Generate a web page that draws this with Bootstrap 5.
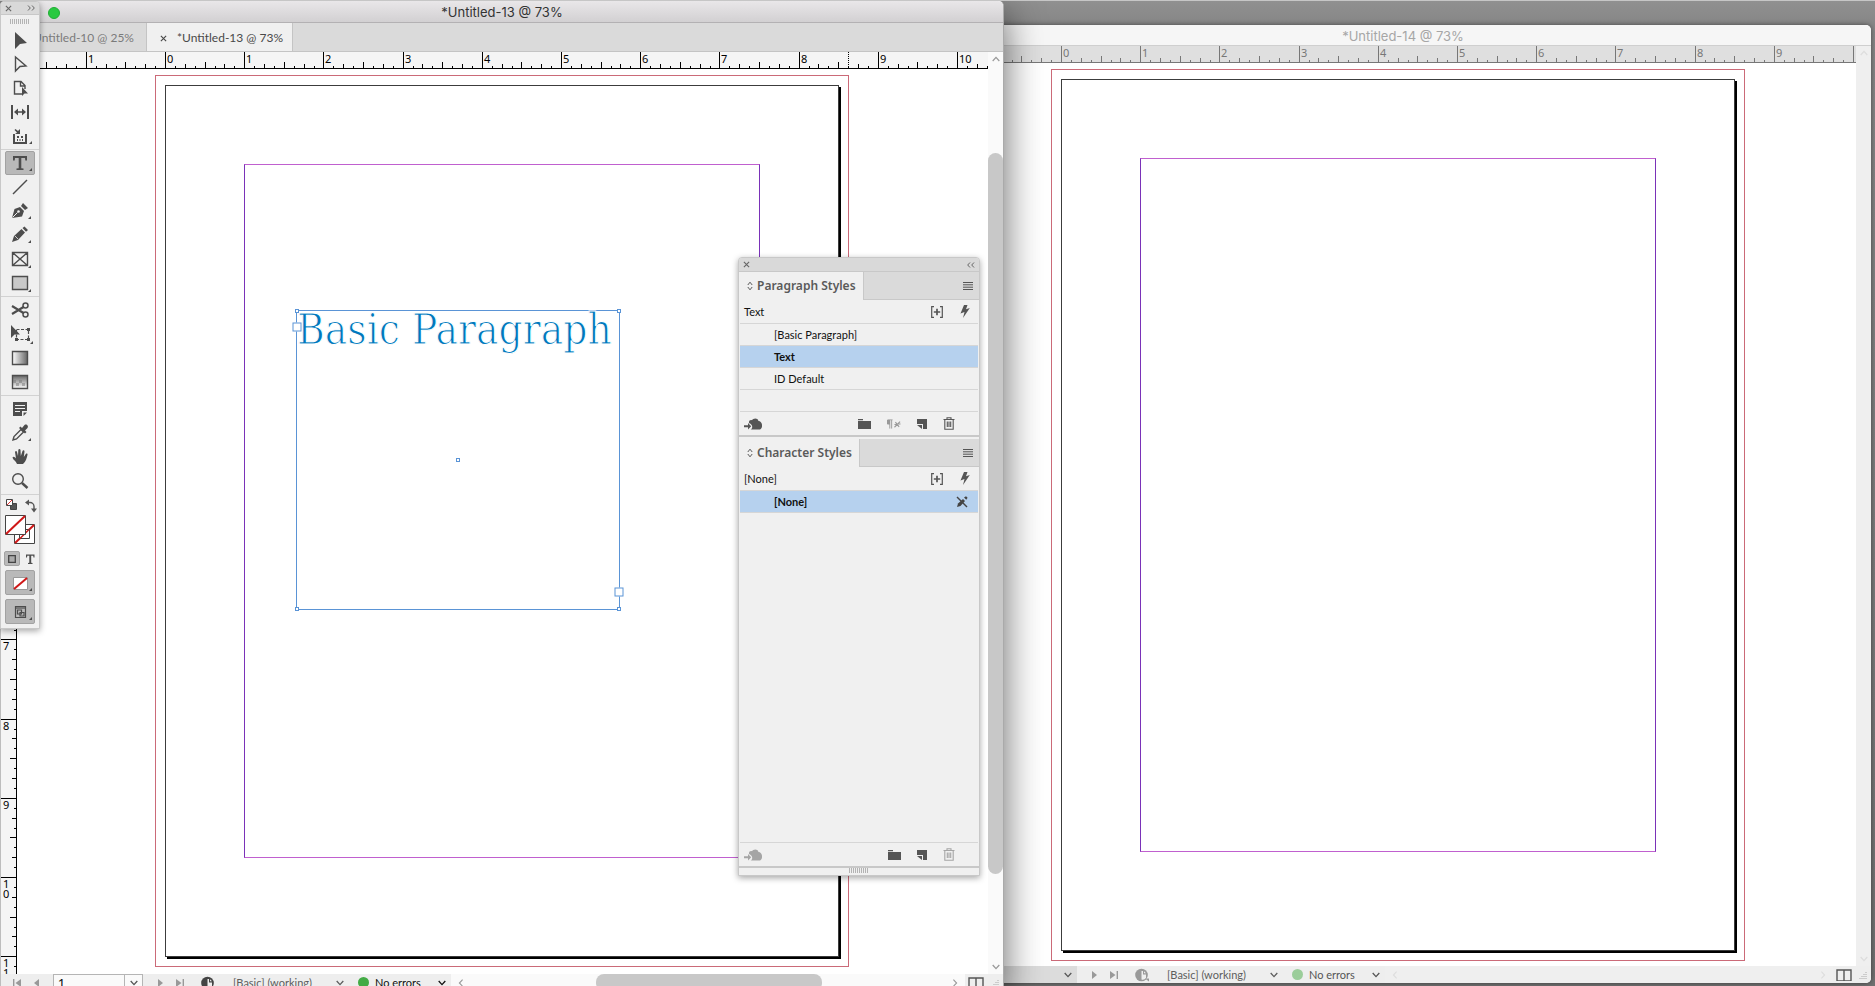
<!DOCTYPE html>
<html lang="en">
<head>
<meta charset="utf-8">
<meta name="viewport" content="width=device-width, initial-scale=1">
<title>Untitled-13 @ 73%</title>
<link href="https://cdn.jsdelivr.net/npm/bootstrap@5.3.0/dist/css/bootstrap.min.css" rel="stylesheet">
<style>
  html, body { height: 100%; }
  body { font-family: Lato, "Noto Sans", sans-serif; font-size: 11px; line-height: 16px; color: #111; overflow: hidden; background: #8c8c8c; }
  button { border: 0; padding: 0; background: none; color: inherit; line-height: inherit; display: inline-flex; align-items: center; justify-content: center; flex: none; }
  svg { display: block; flex: none; }
  .desktop { height: 100vh; border-top: 1px solid #c6c6c6; background: linear-gradient(#909090, #868686 24px, #707070); }

  /* document windows */
  .doc-window { background: #fff; }
  .win-front { left: 0; top: 0; bottom: -5px; width: 1004px; border-left: 1px solid #bdbdbd; border-right: 1px solid #aaa; border-radius: 5px 5px 0 0; box-shadow: 0 12px 38px rgba(0,0,0,.6); z-index: 2; }
  .win-back { left: 935px; right: 4px; top: 24px; bottom: 3px; border-radius: 5px; box-shadow: 0 0 5px rgba(0,0,0,.5); z-index: 1; }
  .win-title { height: 22px; font: 13px/22px Inter, sans-serif; background: linear-gradient(#e9e7e9, #d2d0d2); border-bottom: 1px solid #b3b1b3; color: #333; border-radius: 5px 5px 0 0; }
  .win-back .win-title { height: 21px; background: #f6f6f6; border-bottom: 1px solid #cfcfcf; color: #a6a6a6; }
  .green-light { width: 12px; height: 12px; background: #29c940; border: 1px solid #1fae34; left: 47px; top: 6px; }
  .doc-tabs { height: 29px; background: #dadada; border-bottom: 1px solid #c4c4c4; font-size: 12px; font-weight: 700; padding-left: 38px; }
  .doc-tab { height: 28px; padding-top: 2px; color: #7a7a7a; white-space: nowrap; }
  .doc-tab.current { background: #f0f0f0; color: #484848; border: solid #c4c4c4; border-width: 0 1px; width: 147px; gap: 10px; padding-left: 4px; }
  .doc-tab.other { width: 107px; justify-content: flex-end; padding-right: 12px; }
  .ruler-x, .ruler-y { font-family: "Noto Sans", sans-serif; }
  .ruler-x { height: 17px; background: #f5f5f5; border-bottom: 1px solid #000; color: #000; }
  .ruler-y { width: 16px; background: #f5f5f5; border-right: 1px solid #000; color: #000; }
  .win-back .ruler-x { background: #dfdfdf; border-color: #777; color: #777; }
  .win-back .ruler-y { background: #dfdfdf; border-color: #777; color: #777; }
  .pasteboard { background: #fff; }
  .sheet { width: 674px; height: 872px; border: 1px solid #3c3c3c; box-shadow: 2px 2px 0 #000; }
  .sheet-front { left: 148px; top: 16px; }
  .sheet-back { left: 110px; top: 16px; }
  .bleed { inset: -11px; border: 1px solid #cb6a78; }
  .margins { inset: 78px 78px 98px; border: 1px solid #7a32b8; border-top-color: #c060cf; border-bottom-color: #c060cf; }

  .text-frame { left: 279px; top: 241px; width: 324px; height: 300px; border: 1px solid #5a94d6; }
  /* the page-coloured outline thins the strokes to a light weight */
  .frame-text { font: 42px/38px "DejaVu Serif Condensed", "DejaVu Serif", serif; color: #0078bd; -webkit-text-stroke: 1px #fff; white-space: nowrap; margin: 0; }
  .knob { width: 4px; height: 4px; border: 1px solid #5a94d6; background: #fff; }
  .port { width: 9px; height: 9px; border: 1px solid #5a94d6; background: #fff; }

  .scroll-y { width: 15px; background: #fafafa; color: #999; }
  .scroll-y button { height: 14px; }
  .thumb { background: #c8c8c8; border-radius: 8px; }
  .win-back .scroll-y { background: #efefef; color: #ddd; }
  .status { height: 17px; background: #eeeeee; padding-left: 6px; color: #999; }
  .status button { width: 20px; height: 16px; }
  .page-no { width: 72px; height: 18px; border: 1px solid #b5b5b5; padding: 0 4px; font-size: 12px; background: #fafafa; color: #000; margin-left: 6px; }
  .status .page-drop { width: 18px; height: 18px; border: 1px solid #b5b5b5; border-left: 0; background: #fafafa; color: #555; margin-right: 7px; }
  .preset { color: #5d5d5d; padding-right: 14px; margin-left: 15px; }
  .status .preset, .status .errors { display: flex; justify-content: space-between; }
  .status .preset { width: 125px; }
  .status .errors { width: 93px; padding-right: 5px; color: #111; }
  .status .errors span + span { margin: 0 auto 0 6px; }
  .dot { width: 11px; height: 11px; background: #43ab45; border-radius: 50%; }
  .scroll-x { background: #fafafa; }
  .win-back .scroll-x { background: #efefef; color: #ddd; }
  .win-back .errors { color: #555; }
  .win-back .dot { background: #9bcd9a; }
  .win-back .page-no { background: #dcdcdc; border-color: #dcdcdc; color: #dcdcdc; }
  .win-back .page-drop { background: #dcdcdc; border-color: #dcdcdc; }
  .status .split { color: #555; width: 22px; }

  /* floating panels */
  .floating { z-index: 5; background: #f0f0f0; border: 1px solid #c8c8c8; border-radius: 4px 4px 0 0; box-shadow: 0 2px 6px rgba(0,0,0,.35); }
  .panel-top { height: 14px; background: #d9d9d9; border-bottom: 1px solid #c8c8c8; color: #666; border-radius: 3px 3px 0 0; }
  .toolbox { left: 0; top: 0; width: 40px; height: 628px; color: #4d4d4d; }
  .toolbox .panel-top { height: 13px; }
  .toolbox .tool { height: 24px; width: 30px; }
  .toolbox .tool.active, .flat-on { background: #b9b9b9; border: 1px solid #a2a2a2; border-radius: 2px; }
  .tool-group { border-bottom: 1px solid #d2d2d2; padding-bottom: 1px; }
  .tool-group + .tool-group { padding-top: 1px; }
  .grip-dots { height: 5px; width: 20px; background: repeating-linear-gradient(90deg, #b3b3b3 0 1px, transparent 1px 2px); }
  .styles-panel { left: 738px; top: 256px; width: 242px; color: #555; }
  .pane-tabs { height: 28px; background: #dadada; }
  .pane-tab { background: #f0f0f0; border-right: 1px solid #c8c8c8; font: 600 12px/16px "Noto Sans", sans-serif; color: #5a5a5a; padding: 0 7px 0 8px; gap: 4px; white-space: nowrap; }
  .pane-rest { border-bottom: 1px solid #c8c8c8; padding-right: 6px; }
  .pane-info { height: 23px; color: #111; padding: 0 9px 0 5px; gap: 17px; }
  .pane-info button, .pane-foot button { color: #555; }
  .style-list { border-top: 1px solid #d6d6d6; margin: 0 1px; border-radius: 0; }
  .style-item { height: 22px; border-bottom: 1px solid #d6d6d6; padding: 0 10px 0 34px; color: #111; width: 100%; justify-content: space-between; }
  .style-item.picked { background: #b6d1ee; font-weight: 700; }
  .pane-foot { height: 25px; padding: 0 24px 0 5px; border-bottom: 2px solid #c8c8c8; }
  .pane-foot button { height: 16px; }
  .pane-gap { margin-bottom: 2px; }
  .char-space { height: 330px; border-bottom: 1px solid #d6d6d6; margin: 0 1px; }
</style>
</head>
<body>
<svg width="0" height="0" class="position-absolute" aria-hidden="true">
  <defs>
    <symbol id="chev-d" viewBox="0 0 8 6"><path d="M.7 1 4 4.6 7.3 1" fill="none" stroke="currentColor" stroke-width="1.3"/></symbol>
    <symbol id="chev-u" viewBox="0 0 8 6"><path d="M.7 5 4 1.4 7.3 5" fill="none" stroke="currentColor" stroke-width="1.2"/></symbol>
    <symbol id="chev-l" viewBox="0 0 6 8"><path d="M4.6.7 1.4 4l3.2 3.3" fill="none" stroke="currentColor" stroke-width="1.1"/></symbol>
    <symbol id="chev-r" viewBox="0 0 6 8"><path d="M1.4.7 4.6 4 1.4 7.3" fill="none" stroke="currentColor" stroke-width="1.1"/></symbol>
    <symbol id="x" viewBox="0 0 8 8"><path d="m1 1 6 6M7 1 1 7" stroke="currentColor" stroke-width="1.3"/></symbol>
    <symbol id="prev" viewBox="0 0 10 8"><path d="M7 0v8L2 4z" fill="currentColor"/></symbol>
    <symbol id="first" viewBox="0 0 10 8"><path d="M1 0h1.4v8H1zM9 0v8L3.500 4z" fill="currentColor"/></symbol>
    <symbol id="next" viewBox="0 0 10 8"><path d="M3 0v8l5-4z" fill="currentColor"/></symbol>
    <symbol id="last" viewBox="0 0 10 8"><path d="M7.600 0H9v8H7.600zM1 0v8l5.500-4z" fill="currentColor"/></symbol>
    <symbol id="pref" viewBox="0 0 14 14"><circle cx="6.500" cy="7" r="6.300" fill="currentColor"/><path d="M6.500 3H8v3.500h3V10c-1 1.600-3 2-4.500 1.500z" fill="#eee"/><path d="M9 3.200 11 5.300H9z" fill="#eee"/><path d="M10 10.500h4v3z" fill="currentColor"/></symbol>
    <symbol id="split" viewBox="0 0 16 12"><path d="M1 1h14v11H1zM8 1v11" fill="none" stroke="currentColor" stroke-width="1.400"/></symbol>
    <symbol id="burger" viewBox="0 0 10 8"><path d="M0 .5h10M0 2.800h10M0 5.200h10M0 7.500h10" stroke="currentColor" stroke-width="1"/></symbol>
    <symbol id="updown" viewBox="0 0 6 10"><path d="M.8 4 3 1.200 5.200 4M.8 6 3 8.800 5.200 6" fill="none" stroke="currentColor"/></symbol>
    <symbol id="plusbox" viewBox="0 0 12 12"><path d="M3 .7H.7v10.600H3M9 .7h2.300v10.600H9" fill="none" stroke="currentColor" stroke-width="1.200"/><path d="M6 2.800v6.400M2.800 6h6.400" stroke="currentColor" stroke-width="1.700"/></symbol>
    <symbol id="bolt" viewBox="0 0 10 13"><path d="M4 0h3.500L6 4.300 9.800 3 3 13l1.500-6L.5 8.500z" fill="currentColor"/></symbol>
    <symbol id="cloud" viewBox="0 0 18 12"><path d="M6.500 11.500C9 10.500 9 6.500 5 5c-.3-2.500 1.500-3.300 3-2.700C9 .2 13.500-.6 14.500 3c4 0 4.800 7 1.500 8.500z" fill="currentColor"/><path d="M0 7.200h4V5l3.200 3.200L4 11.400V9.200H0z" fill="currentColor"/></symbol>
    <symbol id="folder" viewBox="0 0 13 10"><path d="M0 0h5v1.200H0zM0 2h13v8H0z" fill="currentColor"/></symbol>
    <symbol id="newitem" viewBox="0 0 10 10"><path d="M0 0h10v10H6V5H0z" fill="currentColor"/><path d="M0 6h5v4z" fill="currentColor"/></symbol>
    <symbol id="trash" viewBox="0 0 12 13"><path d="M.5 2.500h11M4 2.500V.8h4v1.700M1.800 2.500v9.700h8.400V2.500M4.300 4.500V10M6 4.500V10M7.700 4.500V10" fill="none" stroke="currentColor" stroke-width="1.100"/></symbol>
    <symbol id="clear" viewBox="0 0 17 10"><path d="M3.500 0H8v1H7.500v9h-1V1h-1v9h-1V5.500a2.750 2.750 0 0 1-1-5.500z" fill="currentColor"/><path d="m10 8.500 6-6M11 3l4 5M10 5.500h3M13.500 5h3" stroke="currentColor" stroke-width="1.200"/></symbol>
    <symbol id="nopen" viewBox="0 0 12 12"><path d="m1 11 1-3.500L7 3l2 2-4.500 5z" fill="currentColor"/><path d="m8 1.500 2-1.300 1.600 1.600-1.300 2z" fill="currentColor"/><path d="m1 1 10 10" stroke="currentColor" stroke-width="1.400"/></symbol>
    <symbol id="griptri" viewBox="0 0 8 8"><path d="M7 1v1M5 3v1M7 3v1M3 5v1M5 5v1M7 5v1M1 7v1M3 7v1M5 7v1M7 7v1" stroke="#aaa" stroke-width="1"/></symbol>
  </defs>
</svg>

<main class="desktop position-relative overflow-hidden">

  <section class="doc-window win-back position-absolute d-flex flex-column overflow-hidden" aria-label="Untitled-14">
    <header class="win-title text-center flex-shrink-0">*Untitled-14 @ 73%</header>
    <div class="d-flex flex-fill overflow-hidden">
      <div class="d-flex flex-column flex-fill overflow-hidden">
        <div class="ruler-x flex-shrink-0" data-axis="x" data-origin="126" data-last="9"></div>
        <div class="d-flex flex-fill overflow-hidden">
          <div class="ruler-y flex-shrink-0"></div>
          <div class="pasteboard position-relative flex-fill overflow-hidden">
            <div class="sheet sheet-back position-absolute">
              <div class="bleed position-absolute"></div>
              <div class="margins position-absolute"></div>
            </div>
          </div>
        </div>
      </div>
      <div class="scroll-y d-flex flex-column justify-content-between">
        <button aria-label="Scroll up"><svg width="8" height="6"><use href="#chev-u"/></svg></button>
        <button aria-label="Scroll down"><svg width="8" height="6"><use href="#chev-d"/></svg></button>
      </div>
    </div>
    <footer class="status d-flex align-items-center flex-shrink-0">
      <button aria-label="First page"><svg width="10" height="8"><use href="#first"/></svg></button>
      <button aria-label="Previous page"><svg width="10" height="8"><use href="#prev"/></svg></button>
      <input class="page-no" aria-label="Page" value="1">
      <button class="page-drop" aria-label="Choose page"><svg width="8" height="6"><use href="#chev-d"/></svg></button>
      <button aria-label="Next page"><svg width="10" height="8"><use href="#next"/></svg></button>
      <button aria-label="Last page"><svg width="10" height="8"><use href="#last"/></svg></button>
      <button class="ms-2" aria-label="Preflight options"><svg width="14" height="14"><use href="#pref"/></svg></button>
      <button class="preset"><span>[Basic] (working)</span><svg width="8" height="6"><use href="#chev-d"/></svg></button>
      <button class="errors"><span class="dot"></span><span>No errors</span><svg width="8" height="6"><use href="#chev-d"/></svg></button>
      <div class="scroll-x d-flex flex-fill h-100 align-items-center justify-content-between">
        <button aria-label="Scroll left"><svg width="6" height="8"><use href="#chev-l"/></svg></button>
        <button aria-label="Scroll right"><svg width="6" height="8"><use href="#chev-r"/></svg></button>
      </div>
      <button class="split" aria-label="Split layout view"><svg width="16" height="12"><use href="#split"/></svg></button>
      <svg class="align-self-end m-1" width="8" height="8"><use href="#griptri"/></svg>
    </footer>
  </section>

  <section class="doc-window win-front position-absolute d-flex flex-column" aria-label="Untitled-13">
    <header class="win-title text-center flex-shrink-0 position-relative">*Untitled-13 @ 73%
      <button class="green-light rounded-circle position-absolute" aria-label="Zoom window"></button>
    </header>
    <nav class="doc-tabs d-flex flex-shrink-0">
      <button class="doc-tab other">Untitled-10 @ 25%</button>
      <button class="doc-tab current"><svg width="7" height="7"><use href="#x"/></svg><span>*Untitled-13 @ 73%</span></button>
    </nav>
    <div class="d-flex flex-fill overflow-hidden">
      <div class="d-flex flex-column flex-fill overflow-hidden">
        <div class="ruler-x flex-shrink-0" data-axis="x" data-origin="164" data-last="10" data-cursor="847"></div>
        <div class="d-flex flex-fill overflow-hidden">
          <div class="ruler-y flex-shrink-0" data-axis="y" data-origin="16" data-last="11"></div>
          <div class="pasteboard position-relative flex-fill overflow-hidden">
            <div class="sheet sheet-front position-absolute">
              <div class="bleed position-absolute"></div>
              <div class="margins position-absolute"></div>
            </div>
            <div class="text-frame position-absolute">
              <p class="frame-text">Basic Paragraph</p>
              <i class="knob position-absolute top-0 start-0 translate-middle"></i>
              <i class="knob position-absolute top-0 start-100 translate-middle"></i>
              <i class="knob position-absolute top-100 start-0 translate-middle"></i>
              <i class="knob position-absolute top-100 start-100 translate-middle"></i>
              <i class="knob position-absolute top-50 start-50 translate-middle"></i>
              <i class="port position-absolute start-0 translate-middle" style="top:16px"></i>
              <i class="port position-absolute start-100 translate-middle" style="top:281px"></i>
            </div>
          </div>
        </div>
      </div>
      <div class="scroll-y d-flex flex-column">
        <button aria-label="Scroll up"><svg width="8" height="6"><use href="#chev-u"/></svg></button>
        <div style="flex:87"></div><div class="thumb" style="flex:719"></div><div style="flex:86"></div>
        <button aria-label="Scroll down"><svg width="8" height="6"><use href="#chev-d"/></svg></button>
      </div>
    </div>
    <footer class="status d-flex align-items-center flex-shrink-0">
      <button aria-label="First page"><svg width="10" height="8"><use href="#first"/></svg></button>
      <button aria-label="Previous page"><svg width="10" height="8"><use href="#prev"/></svg></button>
      <input class="page-no" aria-label="Page" value="1">
      <button class="page-drop" aria-label="Choose page"><svg width="8" height="6"><use href="#chev-d"/></svg></button>
      <button aria-label="Next page"><svg width="10" height="8"><use href="#next"/></svg></button>
      <button aria-label="Last page"><svg width="10" height="8"><use href="#last"/></svg></button>
      <button class="ms-2" aria-label="Preflight options"><svg width="14" height="14" color="#444"><use href="#pref"/></svg></button>
      <button class="preset"><span>[Basic] (working)</span><svg width="8" height="6"><use href="#chev-d"/></svg></button>
      <button class="errors"><span class="dot"></span><span>No errors</span><svg width="8" height="6"><use href="#chev-d"/></svg></button>
      <div class="scroll-x d-flex flex-fill h-100 align-items-center">
        <button aria-label="Scroll left"><svg width="6" height="8"><use href="#chev-l"/></svg></button>
        <div style="flex:126"></div><div class="thumb h-100" style="flex:229"></div><div style="flex:124"></div>
        <button aria-label="Scroll right"><svg width="6" height="8"><use href="#chev-r"/></svg></button>
      </div>
      <button class="split" aria-label="Split layout view"><svg width="16" height="12"><use href="#split"/></svg></button>
      <svg class="align-self-end m-1" width="8" height="8"><use href="#griptri"/></svg>
    </footer>
  </section>

  <aside class="floating toolbox position-absolute" aria-label="Tools">
    <div class="panel-top d-flex align-items-center justify-content-between px-1">
      <button aria-label="Close"><svg width="7" height="7"><use href="#x"/></svg></button>
      <button aria-label="Expand"><svg width="8" height="6" viewBox="0 0 8 6" fill="none" stroke="currentColor"><path d="M1 .5 3.300 3 1 5.500M5 .5 7.300 3 5 5.500"/></svg></button>
    </div>
    <div class="d-flex justify-content-center pt-1 pb-1"><div class="grip-dots"></div></div>
    <div class="tool-group d-flex flex-column align-items-center">
      <button class="tool" aria-label="Selection"><svg width="28" height="24" viewBox="0 0 28 24"><path d="M9 4v17l5-5 7-1z" fill="currentColor"/></svg></button>
      <button class="tool" aria-label="Direct selection"><svg width="28" height="24" viewBox="0 0 28 24"><path d="M9.500 5v14l4.500-4.500 6-.5z" fill="none" stroke="currentColor" stroke-width="1.400"/></svg></button>
      <button class="tool" aria-label="Page"><svg width="28" height="24" viewBox="0 0 28 24"><path d="M16 18H8.500V5.500H15l4 4V13M14.500 5.500V10H19" fill="none" stroke="currentColor" stroke-width="1.400"/><path d="M16 11v9l2.500-2.500H22z" fill="currentColor"/></svg></button>
      <button class="tool" aria-label="Gap"><svg width="28" height="24" viewBox="0 0 28 24"><path d="M6 5v14M22 5v14" stroke="currentColor" stroke-width="2"/><path d="M10 12h8" stroke="currentColor" stroke-width="1.500"/><path d="m8 12 4-3.500v7zM20 12l-4-3.500v7z" fill="currentColor"/></svg></button>
      <button class="tool" aria-label="Content collector"><svg width="28" height="24" viewBox="0 0 28 24"><path d="M8 10v9h12v-9" fill="none" stroke="currentColor" stroke-width="2"/><path d="M11 12h2v2h-2zM15 12h2v2h-2zM11 15h1v2h-1zM13.500 15h1v2h-1zM16 15h1v2h-1zM14 5v5H9l2-1.500L8.500 6l1-1L12 7z" fill="currentColor"/><path d="M26 17v3h-3z" fill="currentColor"/></svg></button>
    </div>
    <div class="tool-group d-flex flex-column align-items-center">
      <button class="tool active" aria-label="Type"><svg width="28" height="24" viewBox="0 0 28 24"><path d="M7 5h14v4.500h-1.700L19 7h-3.700v10.200l2.200.3V19h-7v-1.500l2.200-.3V7H9l-.3 2.500H7z" fill="currentColor"/><path d="M26 17v3h-3z" fill="currentColor"/></svg></button>
      <button class="tool" aria-label="Line"><svg width="28" height="24" viewBox="0 0 28 24"><path d="M7 19 21 5" stroke="currentColor" stroke-width="1.500"/></svg></button>
      <button class="tool" aria-label="Pen"><svg width="28" height="24" viewBox="0 0 28 24"><path d="m6 19 2.500-9L14 8l4 4-2 5.500zM15 7l2-3 5 5-3 2z" fill="currentColor"/><path d="m6.500 18.500 5-5" stroke="#f0f0f0"/><circle cx="12.500" cy="12.500" r="1.300" fill="#f0f0f0"/><path d="M25 17v3h-3z" fill="currentColor"/></svg></button>
      <button class="tool" aria-label="Pencil"><svg width="28" height="24" viewBox="0 0 28 24"><path d="m6 19 2-6 7.500-7 3.500 3.500L12 17zM16.500 5l2-1.500L22 7l-2 1.800z" fill="currentColor"/><path d="m9 13 3 3" stroke="#f0f0f0" stroke-width=".8"/><path d="M25 17v3h-3z" fill="currentColor"/></svg></button>
      <button class="tool" aria-label="Rectangle frame"><svg width="28" height="24" viewBox="0 0 28 24"><path d="M6.500 5.500h15v13h-15zl15 13M21.500 5.500l-15 13" fill="none" stroke="currentColor" stroke-width="1.400"/><path d="M25 18v3h-3z" fill="currentColor"/></svg></button>
      <button class="tool" aria-label="Rectangle"><svg width="28" height="24" viewBox="0 0 28 24"><path d="M6.500 5.500h15v13h-15z" fill="#c9c9c9" stroke="currentColor" stroke-width="1.400"/><path d="M25 18v3h-3z" fill="currentColor"/></svg></button>
    </div>
    <div class="tool-group d-flex flex-column align-items-center">
      <button class="tool" aria-label="Scissors"><svg width="28" height="24" viewBox="0 0 28 24"><g fill="none" stroke="currentColor"><circle cx="19.500" cy="7.500" r="2.500" stroke-width="1.500"/><circle cx="19.500" cy="16.500" r="2.500" stroke-width="1.500"/><path d="m6 8 11.500 7M6 16l11.500-7" stroke-width="2.200"/></g></svg></button>
      <button class="tool" aria-label="Free transform"><svg width="28" height="24" viewBox="0 0 28 24"><path d="M10.500 7.500h12v10h-12z" fill="none" stroke="currentColor" stroke-width="1.200" stroke-dasharray="3 1.500"/><path d="M5 3v13l3.500-3.500H14zM21 6h3v3h-3zM21 16h3v3h-3zM9 16h3v3H9z" fill="currentColor"/><path d="M27 19v3h-3z" fill="currentColor"/></svg></button>
      <button class="tool" aria-label="Gradient swatch"><svg width="28" height="24" viewBox="0 0 28 24"><defs><linearGradient id="g1"><stop stop-color="#fff"/><stop offset="1" stop-color="#666"/></linearGradient><linearGradient id="g2" x2="0" y2="1"><stop stop-color="#666"/><stop offset="1" stop-color="#fff"/></linearGradient></defs><path d="M6.500 5.500h15v13h-15z" fill="url(#g1)" stroke="currentColor" stroke-width="1.400"/></svg></button>
      <button class="tool" aria-label="Gradient feather"><svg width="28" height="24" viewBox="0 0 28 24"><path d="M6.500 5.500h15v13h-15z" fill="url(#g2)" stroke="currentColor" stroke-width="1.400"/><path d="M7 10h3v3H7zM13 10h3v3h-3zM10 13h3v3h-3zM16 13h3v3h-3z" fill="#777" opacity=".5"/></svg></button>
    </div>
    <div class="tool-group d-flex flex-column align-items-center">
      <button class="tool" aria-label="Note"><svg width="28" height="24" viewBox="0 0 28 24"><path d="M7 5h14v9h-5v5H7z" fill="currentColor"/><path d="M17.500 15.500H21L17.500 19z" fill="currentColor"/><path d="M9 8.500h10M9 11.500h10M9 14.500h5" stroke="#f0f0f0" stroke-width="1.200"/></svg></button>
      <button class="tool" aria-label="Eyedropper"><svg width="28" height="24" viewBox="0 0 28 24"><path d="m7 19 1-3.500 7-7 2.500 2.500-7 7z" fill="none" stroke="currentColor" stroke-width="1.400"/><path d="m13 7 1.500-1.500L16 7l2.500-3c2-1.500 4.500 1 3 3L19 9.500l1.500 1.500L19 12.500z" fill="currentColor"/><path d="M25 17v3h-3z" fill="currentColor"/></svg></button>
      <button class="tool" aria-label="Hand"><svg width="28" height="24" viewBox="0 0 28 24"><path d="M11 19c-1-3-4-4-4.500-6.500 1-1.500 2.500 0 3.500 1L9 7c.5-1.500 1.800-1.200 2 0l1 4 .3-6c.3-1.500 1.900-1.500 2.200 0l.3 6L16.500 6c.5-1.200 2-.8 2 .4L17.800 12l2-3c.8-1 2-.4 1.700.8-.8 3.500-1.500 7-4.500 9.200z" fill="currentColor"/></svg></button>
      <button class="tool" aria-label="Zoom"><svg width="28" height="24" viewBox="0 0 28 24"><circle cx="12" cy="10" r="5.300" fill="none" stroke="currentColor" stroke-width="1.400"/><path d="m16 14 5.500 5" stroke="currentColor" stroke-width="2.400"/></svg></button>
    </div>
    <div class="d-flex flex-column align-items-center">
      <button class="mb-1" aria-label="Fill and stroke"><svg width="34" height="52" viewBox="0 0 34 52"><path d="M7.500 8.500h6v6h-6z" fill="#555" stroke="#444"/><path d="M3.500 4.500h6v6h-6z" fill="#fff" stroke="#444"/><path d="m4 10 5-5" stroke="#d33"/><path d="M25 7.500h2a4 4 0 0 1 4 4V15" fill="none" stroke="#555" stroke-width="1.400"/><path d="m22 7.500 4-3v6zM28 13.500h6l-3 4z" fill="#555"/>
      <path d="M11.500 29.500h20v19h-20z" fill="#fff" stroke="#444"/><path d="m12 48 19-18" stroke="#cf1717" stroke-width="2"/><path d="M16.500 34.500h10v9h-10z" fill="#fff" stroke="#444"/><path d="m17 43.500 9-9" stroke="#cf1717" stroke-width="1.500"/><path d="M2.500 20.500h20v19h-20z" fill="#fff" stroke="#444"/><path d="m3 39 19-18" stroke="#cf1717" stroke-width="2"/></svg></button>
      <div class="d-flex gap-1 mb-1">
        <button class="flat-on" style="width:16px;height:15px" aria-label="Formatting affects container"><svg width="8" height="8" viewBox="0 0 8 8"><path d="M.7.7h6.600v6.600H.7z" fill="#aaa" stroke="#444" stroke-width="1.300"/></svg></button>
        <button aria-label="Formatting affects text"><svg width="12" height="12" viewBox="0 0 12 12"><path d="M2 1.500h8.500v3h-1l-.3-1.700H7.200v7l1.300.3V11H4v-.9l1.300-.3v-7h-2L3 4.500H2z" fill="currentColor"/></svg></button>
      </div>
      <button class="flat-on mb-1" style="width:30px;height:25px" aria-label="Apply none"><svg width="28" height="22" viewBox="0 0 28 22"><path d="M7.500 5.500h14v12h-14z" fill="#fff" stroke="#999"/><path d="m8 17 13-11" stroke="#cf1717" stroke-width="2"/><path d="M26 16v3h-3z" fill="currentColor"/></svg></button>
      <button class="flat-on" style="width:30px;height:25px" aria-label="View options"><svg width="28" height="22" viewBox="0 0 28 22"><g fill="none" stroke="currentColor" stroke-width="1.200"><path d="M9.500 5.500h10v11h-10z"/><path d="M9.500 7h10"/><path d="M11.500 9h4v4h-4zM14 11.500h4V15h-4z"/></g><path d="M26 16v3h-3z" fill="currentColor"/></svg></button>
    </div>
  </aside>

  <aside class="floating styles-panel position-absolute" aria-label="Styles">
    <div class="panel-top d-flex align-items-center justify-content-between px-1">
      <button aria-label="Close panel"><svg width="7" height="7"><use href="#x"/></svg></button>
      <button aria-label="Collapse panel"><svg width="8" height="6" viewBox="0 0 8 6" fill="none" stroke="currentColor"><path d="M3 .5.700 3 3 5.500M7 .5 4.700 3 7 5.500"/></svg></button>
    </div>
    <section class="pane-gap">
      <div class="pane-tabs d-flex">
        <button class="pane-tab"><svg width="6" height="10"><use href="#updown"/></svg>Paragraph Styles</button>
        <div class="pane-rest flex-fill d-flex align-items-center justify-content-end"><button aria-label="Paragraph menu"><svg width="10" height="8"><use href="#burger"/></svg></button></div>
      </div>
      <div class="pane-info d-flex align-items-center"><span class="me-auto">Text</span>
        <button aria-label="New style group"><svg width="12" height="12"><use href="#plusbox"/></svg></button>
        <button aria-label="Quick apply"><svg width="10" height="13"><use href="#bolt"/></svg></button></div>
      <div class="style-list">
        <button class="style-item d-flex">[Basic Paragraph]</button>
        <button class="style-item picked d-flex">Text</button>
        <button class="style-item d-flex">ID Default</button>
        <div class="style-item"></div>
      </div>
      <div class="pane-foot d-flex align-items-center">
        <button class="me-auto" aria-label="Add to library"><svg width="18" height="12"><use href="#cloud"/></svg></button>
        <div class="d-flex align-items-center gap-3">
          <button aria-label="New group"><svg width="13" height="10"><use href="#folder"/></svg></button>
          <button aria-label="Clear overrides" style="color:#999"><svg width="14" height="10" viewBox="2 0 15 10"><use href="#clear" width="17" height="10"/></svg></button>
          <button aria-label="New style"><svg width="10" height="10"><use href="#newitem"/></svg></button>
          <button aria-label="Delete style"><svg width="12" height="13"><use href="#trash"/></svg></button>
        </div>
      </div>
    </section>
    <section>
      <div class="pane-tabs d-flex">
        <button class="pane-tab"><svg width="6" height="10"><use href="#updown"/></svg>Character Styles</button>
        <div class="pane-rest flex-fill d-flex align-items-center justify-content-end"><button aria-label="Character menu"><svg width="10" height="8"><use href="#burger"/></svg></button></div>
      </div>
      <div class="pane-info d-flex align-items-center"><span class="me-auto">[None]</span>
        <button aria-label="New style group"><svg width="12" height="12"><use href="#plusbox"/></svg></button>
        <button aria-label="Quick apply"><svg width="10" height="13"><use href="#bolt"/></svg></button></div>
      <div class="style-list">
        <button class="style-item picked d-flex">[None]<svg width="12" height="12" color="#444"><use href="#nopen"/></svg></button>
      </div>
      <div class="char-space"></div>
      <div class="pane-foot d-flex align-items-center">
        <button class="me-auto" aria-label="Add to library" style="color:#a5a5a5"><svg width="18" height="12"><use href="#cloud"/></svg></button>
        <div class="d-flex align-items-center gap-3">
          <button aria-label="New group"><svg width="13" height="10"><use href="#folder"/></svg></button>
          <button aria-label="New style"><svg width="10" height="10"><use href="#newitem"/></svg></button>
          <button aria-label="Delete style" style="color:#a5a5a5"><svg width="12" height="13"><use href="#trash"/></svg></button>
        </div>
      </div>
      <div class="d-flex justify-content-center" style="height:7px"><div class="grip-dots"></div></div>
    </section>
  </aside>
</main>

<script src="https://cdn.jsdelivr.net/npm/bootstrap@5.3.0/dist/js/bootstrap.bundle.min.js"></script>
<script>
  // Rulers: eight divisions to the inch, 79.2px per inch at 73% zoom.
  const STEP = 79.2 / 8, NS = 'http://www.w3.org/2000/svg';
  document.querySelectorAll('[data-axis]').forEach(el => {
    const across = el.dataset.axis === 'x', origin = +el.dataset.origin, last = +el.dataset.last;
    const svg = document.createElementNS(NS, 'svg');
    svg.setAttribute('width', '100%'); svg.setAttribute('height', '100%');
    const add = (tag, attrs, text) => {
      const n = document.createElementNS(NS, tag);
      for (const k in attrs) n.setAttribute(k, attrs[k]);
      if (text !== undefined) n.textContent = text;
      svg.appendChild(n);
    };
    for (let i = -16; i < 96; i++) {
      const p = Math.round(origin + i * STEP), inch = i % 8 === 0;
      if (p < 0) continue;
      const len = inch ? 16 : i % 4 === 0 ? 6 : i % 2 === 0 ? 4 : 2;
      add('rect', across ? { x: p, y: 16 - len, width: 1, height: len, fill: 'currentColor' }
                         : { x: 15 - len, y: p, width: len, height: 1, fill: 'currentColor' });
      const label = String(Math.abs(i / 8));
      if (!inch || i / 8 > last) continue;
      if (across) add('text', { x: p + 2, y: 11, 'font-size': 11, fill: 'currentColor' }, label);
      else [...label].forEach((c, k) => add('text', { x: 2, y: p + 11 + k * 10, 'font-size': 11, fill: 'currentColor' }, c));
    }
    if (el.dataset.cursor) add('path', { d: `M${+el.dataset.cursor + .5} 0v16`, stroke: '#000', 'stroke-dasharray': '1 1' });
    el.appendChild(svg);
  });
</script>
</body>
</html>
